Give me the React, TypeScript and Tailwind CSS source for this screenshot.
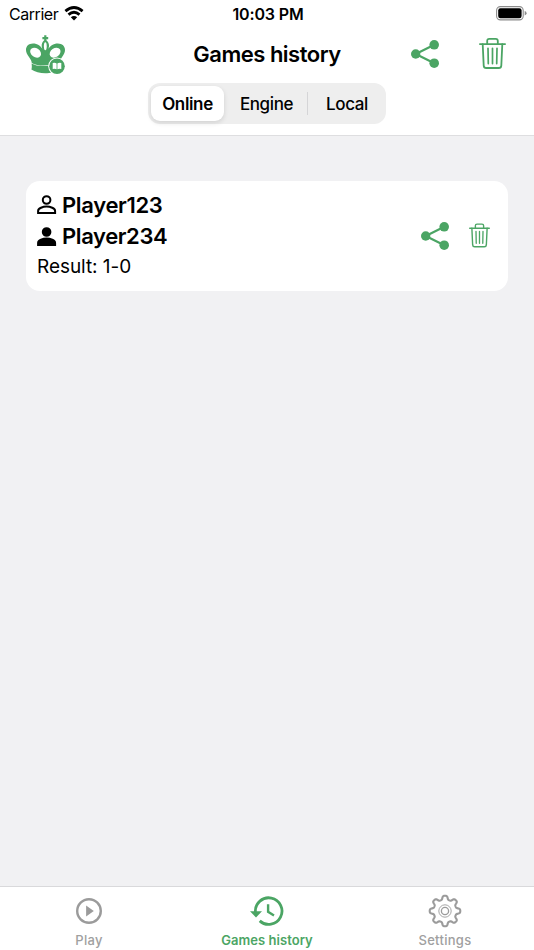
import React from "react";

const GREEN = "#4ba564";

function Wifi() {
  return (
    <svg width="20" height="15" viewBox="0 0 20 15" fill="none" stroke="#000" strokeWidth="2.8">
      <path d="M1.4 5.1Q10 -2 18.6 5.1" />
      <path d="M4.5 8.6Q10 4 15.5 8.6" />
      <path d="M10 14.4L6.8 11.3Q10 8.8 13.2 11.3Z" fill="#000" stroke="none" />
    </svg>
  );
}

function Battery() {
  return (
    <svg width="31" height="15" viewBox="0 0 31 15">
      <rect x="0.6" y="0.6" width="26.6" height="13.3" rx="3.8" fill="none" stroke="#8c8c8c" strokeWidth="1.1" />
      <rect x="2.2" y="2.3" width="23.4" height="9.9" rx="2.2" />
      <path d="M28.7 5Q30.6 5.6 30.6 7.2Q30.6 8.8 28.7 9.5Z" fill="#8c8c8c" />
    </svg>
  );
}

function Crown() {
  return (
    <svg width="40" height="40" viewBox="0 0 40 40">
      <g fill={GREEN}>
        <path d="M18.2 0.2H20.4V2.1H22.2V4.2H20.4V5.2C22.2 6.6 23.3 9 23 11.4C22.8 12.8 22.3 14 21.6 15.4C23.5 11 27.5 8.6 31.8 8.6C36.2 8.6 39 11.4 39 15C39 20 34.5 22.5 33.3 27.6C26 30.6 13 32.1 5.8 27.9C5.2 22.8 0 20 0 15C0 11.4 2.6 8.6 7 8.6C11.3 8.6 15.3 11 17.1 15.4C16.4 14 15.9 12.8 15.7 11.4C15.4 9 16.4 6.6 18.2 5.2V4.2H16.4V2.1H18.2Z" />
        <path d="M5.6 28.6C12 32.6 24 31.2 33 28.2L32.3 34.4C27 39.5 12 39.4 5.4 34.6C6.1 32.5 5.8 30.6 5.6 28.6Z" />
      </g>
      <g fill="#fff">
        <ellipse cx="9.6" cy="17.7" rx="5.9" ry="4.4" transform="rotate(35 9.6 17.7)" />
        <ellipse cx="29.1" cy="17.7" rx="5.9" ry="4.4" transform="rotate(-35 29.1 17.7)" />
        <ellipse cx="19.3" cy="11.2" rx="1.4" ry="4" />
        <circle cx="31" cy="31.2" r="8.8" />
      </g>
      <circle cx="31" cy="31.2" r="7.8" fill={GREEN} />
      <path d="M26.7 28Q29 27.2 30.6 28.5V34.2Q28.8 33.2 26.7 34ZM31.4 28.5Q33 27.2 35.3 28V34Q33.2 33.2 31.4 34.2Z" fill="#fff" />
    </svg>
  );
}

function Share() {
  return (
    <svg width="28" height="28" viewBox="0 0 28 28" fill={GREEN}>
      <path d="M23.3 4.8L4.7 14L23.3 23.2" fill="none" stroke={GREEN} strokeWidth="2.2" />
      <circle cx="4.7" cy="14" r="4.7" />
      <circle cx="23.2" cy="4.8" r="4.8" />
      <circle cx="23.2" cy="23.2" r="4.8" />
    </svg>
  );
}

function Trash({ width, height }: { width: number; height: number }) {
  return (
    <svg width={width} height={height} viewBox="0 0 27 31" fill="none" stroke={GREEN} strokeWidth="1.8" strokeLinecap="round">
      <path d="M0.9 6.1H26.1M8.2 6V3Q8.2 0.9 10.3 0.9H16.7Q18.8 0.9 18.8 3V6" />
      <path d="M3.7 6.2L4.7 27.6Q4.9 30 7.2 30H19.8Q22.1 30 22.3 27.6L23.3 6.2" />
      <path d="M9 10.3L9.3 25.6M13.5 10.3V25.6M18 10.3L17.7 25.6" strokeWidth="1.7" />
    </svg>
  );
}

function Person({ filled }: { filled?: boolean }) {
  return (
    <svg width="20" height="20" viewBox="0 0 20 20" fill={filled ? "#000" : "none"} stroke="#000" strokeWidth="2">
      <circle cx="9.6" cy="5" r="3.8" />
      <path d="M1.1 18V15.9C1.1 13.2 6 11.6 9.6 11.6S18.1 13.2 18.1 15.9V18Z" />
    </svg>
  );
}

function PlayIcon() {
  return (
    <svg width="34" height="34" viewBox="0 0 34 34">
      <circle cx="17" cy="17" r="11.8" fill="none" stroke="#9b9b9b" strokeWidth="2.4" />
      <path d="M14.1 11.6V22.4L21.8 17Z" fill="#9b9b9b" />
    </svg>
  );
}

function HistoryIcon() {
  return (
    <svg width="34" height="34" viewBox="0 0 34 34" fill="none" stroke={GREEN} strokeWidth="2.8">
      <path d="M5.4 18A13.3 13.3 0 1 1 9.7 26.9" />
      <path d="M18.1 10.3V17.8L24 21.4" strokeWidth="2.4" />
      <path d="M0 17.2H12L6 23.5Z" fill={GREEN} stroke="none" />
    </svg>
  );
}

// Eight soft teeth: the radius swings between root and crest around the wheel.
const gearPoints = Array.from({ length: 160 }, (_, i) => {
  const a = (i / 160) * Math.PI * 2;
  const radius = 13.4 + 1.95 * Math.tanh(2 * Math.cos(8 * a));
  return `${(17 + radius * Math.cos(a)).toFixed(2)},${(17 + radius * Math.sin(a)).toFixed(2)}`;
}).join(" ");

function Gear() {
  return (
    <svg width="34" height="34" viewBox="0 0 34 34" fill="none" stroke="#9b9b9b">
      <polygon points={gearPoints} strokeWidth="2.1" strokeLinejoin="round" />
      <circle cx="17" cy="17" r="6.2" strokeWidth="0.9" />
      <circle cx="17" cy="17" r="3.6" strokeWidth="1.3" />
    </svg>
  );
}

function Tab({ label, active, children }: { label: string; active?: boolean; children: React.ReactNode }) {
  return (
    <button className={`flex flex-1 flex-col items-center pt-[7px] text-[13px] leading-4 ${active ? "font-semibold tracking-[0.05px] text-[#4ba564]" : "font-medium tracking-[0.3px] text-[#a0a0a0]"}`}>
      {children}
      <span className="mt-1 whitespace-nowrap">{label}</span>
    </button>
  );
}

export default function App() {
  return (
    <div className="flex h-[950px] w-[534px] flex-col overflow-hidden bg-[#f1f1f3] font-['Inter','Liberation_Sans',sans-serif] text-black">
      <header className="h-[136px] shrink-0 border-b border-[#dedee0] bg-white">
        <div className="grid h-[27px] grid-cols-3 items-center pr-[7px] pl-[9px]">
          <div className="flex items-center gap-[6px] text-[16px] tracking-[-0.45px]">
            <span>Carrier</span>
            <Wifi />
          </div>
          <span className="text-center text-[16px] font-semibold tracking-[-0.15px] whitespace-nowrap">10:03 PM</span>
          <div className="flex justify-end"><Battery /></div>
        </div>
        <div className="grid h-[54px] grid-cols-[1fr_auto_1fr] items-center pr-[28px] pl-[26px]">
          <div className="pt-[2px]"><Crown /></div>
          <h1 className="pl-[2px] text-[22px] font-semibold tracking-[-0.5px] whitespace-nowrap">Games history</h1>
          <div className="flex items-center justify-end gap-[40px]">
            <Share />
            <div className="pb-[2px]"><Trash width={27} height={31} /></div>
          </div>
        </div>
        <div className="mx-auto mt-[2px] flex h-[41px] w-[238px] items-center rounded-[12px] bg-[#eeeeee] p-[3px] text-[17px] font-medium">
          <button className="h-[35px] w-[73px] rounded-[9px] bg-white pt-[2px] font-semibold tracking-[-0.35px] shadow-[0_2px_5px_rgba(0,0,0,0.12)]">Online</button>
          <button className="h-[35px] w-[83px] pt-[2px] pl-[2px] tracking-[-0.4px]">Engine</button>
          <div className="h-[23px] w-px bg-[#d5d5d7]" />
          <button className="h-[35px] flex-1 pt-[2px] pl-[3px] tracking-[-0.4px]">Local</button>
        </div>
      </header>
      <main className="flex-1 px-[26px] pt-[45px]">
        <article className="flex h-[110px] items-center justify-between rounded-[14px] bg-white pr-[18px] pl-[11px]">
          <div className="pb-[2px]">
            <div className="flex h-[32px] items-center gap-[5px] text-[22px] font-semibold tracking-[-0.33px]"><Person />Player123</div>
            <div className="flex h-[31px] items-center gap-[5px] text-[22px] font-semibold tracking-[-0.4px]"><Person filled />Player234</div>
            <div className="h-[29px] text-[19px] leading-[29px] tracking-[-0.05px]">Result: 1-0</div>
          </div>
          <div className="flex items-center gap-[20px]">
            <Share />
            <div className="pb-px"><Trash width={21} height={25} /></div>
          </div>
        </article>
      </main>
      <nav className="flex h-[64px] shrink-0 border-t border-[#d9d9db] bg-white">
        <Tab label="Play"><PlayIcon /></Tab>
        <Tab label="Games history" active><HistoryIcon /></Tab>
        <Tab label="Settings"><Gear /></Tab>
      </nav>
    </div>
  );
}
